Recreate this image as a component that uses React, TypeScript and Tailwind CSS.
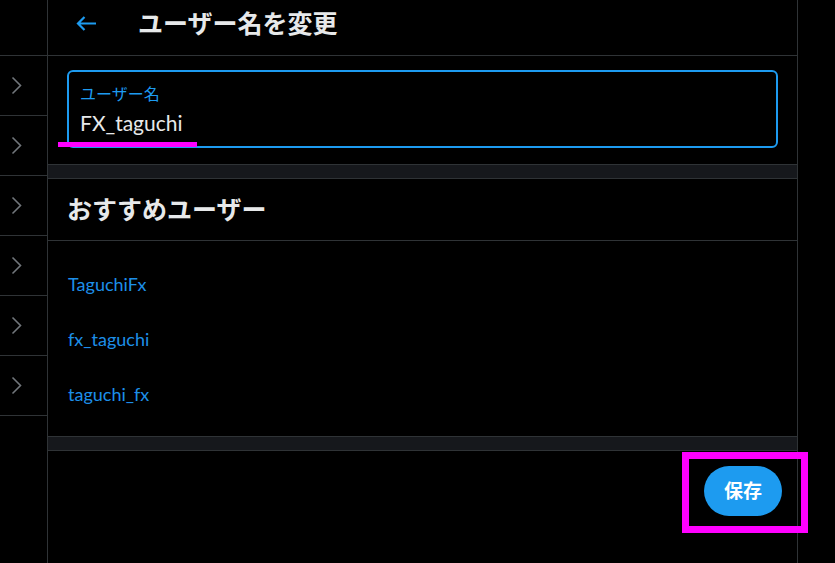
import React from "react";

const suggestions = ["TaguchiFx", "fx_taguchi", "taguchi_fx"];

const Chevron = () => (
  <svg width="11" height="19" viewBox="0 0 11 19" fill="none">
    <path d="M1.5 1.5l8 8-8 8" stroke="#71767b" strokeWidth="1.6" />
  </svg>
);

const BackArrow = () => (
  <svg width="21" height="15" viewBox="0 0 21 15" fill="none">
    <path
      d="M20 7.5H2M8.5 1L2 7.5 8.5 14"
      stroke="#1d9bf0"
      strokeWidth="2.2"
    />
  </svg>
);

const App = () => {
  return (
    <div
      className="relative flex h-[563px] w-[835px] overflow-hidden bg-black"
      style={{ fontFamily: '"Lato", "Noto Sans CJK JP", sans-serif' }}
    >
      {/* left rail */}
      <div className="flex w-[48px] shrink-0 flex-col border-r border-[#2f3336]">
        <div className="h-[56px] border-b border-[#2f3336]" />
        {[0, 1, 2, 3, 4, 5].map((i) => (
          <div
            key={i}
            className="flex h-[60px] items-center border-b border-[#2f3336] pl-[11px]"
          >
            <Chevron />
          </div>
        ))}
      </div>

      {/* main column */}
      <div className="flex w-[750px] shrink-0 flex-col border-r border-[#2f3336]">
        <div className="flex h-[56px] items-center border-b border-[#2f3336] pb-[9px]">
          <div className="ml-[28px] flex w-[62px] items-center">
            <BackArrow />
          </div>
          <h1 className="text-[25px] font-bold leading-none text-[#e7e9ea]">
            ユーザー名を変更
          </h1>
        </div>

        <div className="px-[19px] pt-[14px] pb-[16px]">
          <div className="flex h-[78px] flex-col rounded-[6px] border-2 border-[#1d9bf0] pl-[11px] pt-[12px]">
            <span className="text-[16px] leading-[20px] text-[#1d9bf0]">
              ユーザー名
            </span>
            <span className="mt-[6px] text-[21px] leading-[26px] text-[#e7e9ea]">
              FX_taguchi
            </span>
          </div>
        </div>

        <div className="h-[15px] border-y border-[#2f3336] bg-[#16181c]" />

        <div className="flex h-[62px] items-center border-b border-[#2f3336] pl-[19px] pb-[1px]">
          <h2 className="text-[25px] font-bold leading-none text-[#e7e9ea]">
            おすすめユーザー
          </h2>
        </div>

        <div className="flex flex-col pt-[16px] pb-[14px]">
          {suggestions.map((name) => (
            <div
              key={name}
              className="flex h-[55px] items-center pl-[20px] text-[18px] text-[#1d8fe8]"
            >
              {name}
            </div>
          ))}
        </div>

        <div className="h-[15px] border-y border-[#2f3336] bg-[#16181c]" />

        <div className="flex justify-end pt-[15px] pr-[15px]">
          <button className="flex h-[50px] w-[78px] items-center justify-center rounded-full bg-[#1d9bf0] text-[19px] font-bold text-white">
            保存
          </button>
        </div>
      </div>

      {/* annotation overlays */}
      <div className="absolute left-[58px] top-[142px] h-[5px] w-[139px] bg-[#ff00ff]" />
      <div className="absolute left-[682px] top-[452px] h-[81px] w-[126px] border-[7px] border-[#ff00ff]" />
    </div>
  );
};

export default App;
